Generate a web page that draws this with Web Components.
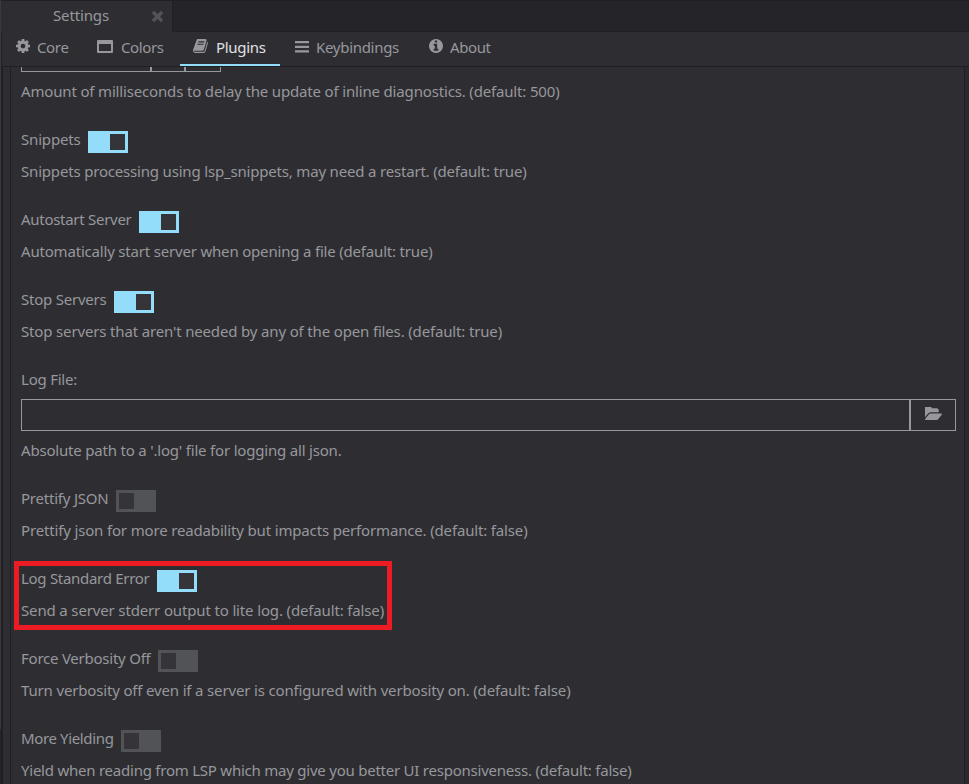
<!DOCTYPE html>
<html lang="en">
<head>
<meta charset="utf-8">
<title>Settings</title>
<style>
html,body{margin:0;height:100%;overflow:hidden;background:#2e2e32}
body{font:15px/20px "Noto Sans","Open Sans",sans-serif;color:#97979c}
</style>
</head>
<body>
<settings-window></settings-window>
<script>
const ICONS = {
  cog: ['128 128 1536 1536', '<path d="M1152 896q0-106-75-181t-181-75-181 75-75 181 75 181 181 75 181-75 75-181zm512-109v222q0 12-8 23t-20 13l-185 28q-19 54-39 91 35 50 107 138 10 12 10 25t-9 23q-27 37-99 108t-94 71q-12 0-26-9l-138-108q-44 23-91 38-16 136-29 186-7 28-36 28h-222q-14 0-24.5-8.5t-11.5-21.5l-28-184q-49-16-90-37l-141 107q-10 9-25 9-14 0-25-11-126-114-165-168-7-10-7-23 0-12 8-23 15-21 51-66.5t54-70.5q-27-50-41-99l-183-27q-13-2-21-12.5t-8-23.5v-222q0-12 8-23t19-13l186-28q14-46 39-92-40-57-107-138-10-12-10-24 0-10 9-23 26-36 98.5-107.5t94.5-71.5q13 0 26 10l138 107q44-23 91-38 16-136 29-186 7-28 36-28h222q14 0 24.5 8.5t11.5 21.5l28 184q49 16 90 37l142-107q9-9 24-9 13 0 25 10 129 119 165 170 7 8 7 22 0 12-8 23-15 21-51 66.5t-54 70.5q26 50 41 98l183 28q13 2 21 12.5t8 23.5z"/>'],
  pane: ['0 0 16 13', '<path fill-rule="evenodd" d="M1 0h14q1 0 1 1v11q0 1-1 1H1q-1 0-1-1V1q0-1 1-1zM2 4v7h12V4z"/>'],
  book: ['64 128 1664 1536', '<path d="M1703 478q40 57 18 129l-275 906q-19 64-76.5 107.5t-122.5 43.5h-923q-77 0-148.5-53.5t-99.5-131.5q-24-67-2-127 0-4 3-27t4-37q1-8-3-21.5t-3-19.5q2-11 8-21t16.5-23.5 16.5-23.5q23-38 45-91.5t30-91.5q3-10 .5-30t-.5-28q3-11 17-28t17-23q21-36 42-92t25-90q1-9-2.5-32t.5-28q4-13 22-30.5t22-22.5q19-26 42.5-84.5t27.5-96.5q1-8-3-25.5t-2-26.5q2-8 9-18t18-23 17-21q8-12 16.5-30.5t15-35 16-36 19.5-32 26.5-23.5 36-11.5 47.5 5.5l-1 3q38-9 51-9h761q74 0 114 56t18 130l-274 906q-36 119-71.5 153.5t-128.5 34.5h-869q-27 0-38 15-11 16-1 43 24 70 144 70h923q29 0 56-15.5t35-41.5l300-987q7-22 5-57 38 15 59 43zm-1064 2q-4 13 2 22.5t20 9.5h608q13 0 25.5-9.5t16.5-22.5l21-64q4-13-2-22.5t-20-9.5h-608q-13 0-25.5 9.5t-16.5 22.5zm-83 256q-4 13 2 22.5t20 9.5h608q13 0 25.5-9.5t16.5-22.5l21-64q4-13-2-22.5t-20-9.5h-608q-13 0-25.5 9.5t-16.5 22.5z"/>'],
  bars: ['0 0 14 12', '<path d="M0 0h14v2.2H0zM0 4.7h14v2.2H0zM0 9.3h14v2.2H0z"/>'],
  info: ['128 128 1536 1536', '<path d="M1152 1376v-160q0-14-9-23t-23-9h-96v-512q0-14-9-23t-23-9h-320q-14 0-23 9t-9 23v160q0 14 9 23t23 9h96v320h-96q-14 0-23 9t-9 23v160q0 14 9 23t23 9h448q14 0 23-9t9-23zm-128-896v-160q0-14-9-23t-23-9h-192q-14 0-23 9t-9 23v160q0 14 9 23t23 9h192q14 0 23-9t9-23zm640 416q0 209-103 385.5t-279.5 279.5-385.5 103-385.5-103-279.5-279.5-103-385.5 103-385.5 279.5-279.5 385.5-103 385.5 103 279.5 279.5 103 385.5z"/>'],
  folder: ['0 256 1815 1280', '<path d="M1815 952q0 31-31 66l-336 396q-43 51-120.5 86.5t-143.5 35.5h-1088q-34 0-60.5-13t-26.5-43q0-31 31-66l336-396q43-51 120.5-86.5t143.5-35.5h1088q34 0 60.5 13t26.5 43zm-343-344v160h-832q-94 0-197 47.5t-164 119.5l-337 396-5 6q0-4-.5-12.5t-.5-12.5v-960q0-92 66-158t158-66h320q92 0 158 66t66 158v32h544q92 0 158 66t66 158z"/>'],
  times: ['302 366 1188 1188', '<path d="M1490 1322q0 40-28 68l-136 136q-28 28-68 28t-68-28l-294-294-294 294q-28 28-68 28t-68-28l-136-136q-28-28-28-68t28-68l294-294-294-294q-28-28-28-68t28-68l136-136q28-28 68-28t68 28l294 294 294-294q28-28 68-28t68 28l136 136q28 28 28 68t-28 68l-294 294 294 294q28 28 28 68z"/>']
};
function define(name, html, setup) {
  const t = document.createElement('template');
  t.innerHTML = html;
  customElements.define(name, class extends HTMLElement {
    connectedCallback() {
      if (this.shadowRoot) return;
      this.attachShadow({mode: 'open'}).append(t.content.cloneNode(true));
      if (setup) setup(this, this.shadowRoot);
    }
  });
}

define('ui-icon', `<style>:host{display:block;flex:none}svg{display:block;width:100%;height:100%;fill:currentColor}</style><svg preserveAspectRatio="none"></svg>`, (el, r) => {
  const [box, body] = ICONS[el.getAttribute('name')];
  const svg = r.querySelector('svg');
  svg.setAttribute('viewBox', box);
  svg.innerHTML = body;
  el.style.width = el.getAttribute('w') + 'px';
  el.style.height = el.getAttribute('h') + 'px';
});

// Text line tracked out to a given advance width.
define('ui-text', `<style>:host{display:block;flex:none;height:20px;line-height:18px;white-space:pre}span{display:inline-block;white-space:pre}</style><span><slot></slot></span>`, (el, r) => {
  const w = +el.getAttribute('w');
  const span = r.querySelector('span');
  el.style.width = w + 'px';
  span.style.letterSpacing = (w - span.getBoundingClientRect().width) / el.textContent.length + 'px';
});

define('ui-toggle', `<style>
:host{display:flex;flex:none;box-sizing:border-box;width:40px;height:22px;padding:3px;background:#525357}
:host([on]){background:#93ddfa;justify-content:flex-end}
i{width:15px;height:16px;background:#353439}
</style><i></i>`);

define('setting-toggle', `<style>
:host{display:block;height:80px}
.head{display:flex;gap:7.5px;height:32px}
ui-toggle{margin-top:1px}
</style><div class="head"><slot name="label"></slot><ui-toggle></ui-toggle></div><slot></slot>`, (el, r) => {
  r.querySelector('ui-toggle').toggleAttribute('on', el.hasAttribute('on'));
});

define('setting-file', `<style>
:host{display:block;height:119px}
.row{display:flex;height:32px;width:935px;box-sizing:border-box;margin:9px 0 10px;border:1px solid #97979c}
.field{flex:1}
.pick{width:44px;border-left:2px solid #97979c;display:flex;align-items:center;justify-content:center;box-sizing:content-box}
ui-icon{margin-top:-3px}
</style><slot name="label"></slot><div class="row"><div class="field"></div><div class="pick"><ui-icon name="folder" w="17" h="13"></ui-icon></div></div><slot></slot>`);

define('setting-number', `<style>
:host{display:block;height:63px}
.row{display:flex;width:200px;height:5px;box-sizing:border-box;border:solid #97979c;border-width:0 1px 1px;margin-bottom:10px}
i{box-sizing:border-box;border-right:2px solid #97979c}
i:first-child{width:130px}i+i{width:34px}
</style><div class="row"><i></i><i></i></div><slot></slot>`);

define('section-tab', `<style>
:host{display:flex;box-sizing:border-box;height:34px;padding:6px 0 0 var(--pad,13px);border-bottom:2px solid transparent;width:var(--w)}
:host([active]){border-color:#93ddfa}
.icon{display:block;color:#97979c;margin-top:var(--dy,2px);margin-right:var(--gap,7px)}
:host([active]) slot{color:#e1e1e6}
</style><div class="icon"></div><slot></slot>`, (el, r) => {
  const icon = document.createElement('ui-icon');
  for (const [a, b] of [['name', 'icon'], ['w', 'iw'], ['h', 'ih']]) icon.setAttribute(a, el.getAttribute(b));
  r.querySelector('.icon').append(icon);
});

define('document-tabs', `<style>
:host{display:flex;height:32px;box-sizing:border-box;border-top:1px solid #202024}
.tab{display:flex;width:172px;box-sizing:border-box;padding:5px 0 0 52px;border-right:1px solid #202024;background:#2e2e32}
ui-icon{color:#525257;margin:4.6px 0 0 42.5px}
.rest{flex:1;background:#252529;border-bottom:1px solid #202024}
</style><div class="tab"><ui-text w="56">Settings</ui-text><ui-icon name="times" w="11" h="11"></ui-icon></div><div class="rest"></div>`);

define('highlight-box', `<style>
:host{display:block;position:absolute;box-sizing:border-box;left:3px;top:494px;width:378px;height:69px;border:5px solid #ed1c24}
</style>`);

define('settings-window', `<style>
:host{display:flex;width:969px;height:784px;overflow:hidden}
.edge{width:1px;flex:none;background:linear-gradient(#3a3a3e 729px,#252529 729px)}
.main{flex:1;display:flex;flex-direction:column;border-left:1px solid #202024;box-sizing:border-box}
document-tabs{margin-left:-1px;flex:none}
nav{display:flex;height:34px;border-bottom:1px solid #202024;flex:none}
.body{flex:1;min-height:0;display:flex;border-left:1px solid #202024}
.gutter{width:7px;flex:none;border-right:1px solid #202024}
.panel{position:relative;flex:1;padding-left:10px;overflow:hidden}
.scroll{width:4px;border-left:1px solid #202024;background:#2a2a2e}
</style>
<div class="edge"></div>
<div class="main">
<document-tabs></document-tabs>
<nav>
<section-tab icon="cog" iw="14" ih="14" style="--w:82px;--pad:14px;--dy:1px"><ui-text w="31.5">Core</ui-text></section-tab>
<section-tab icon="pane" iw="16" ih="13" style="--w:96px;--gap:8px"><ui-text w="42.5">Colors</ui-text></section-tab>
<section-tab active icon="book" iw="15" ih="14" style="--w:100px;--gap:8px;--dy:1px"><ui-text w="49.5">Plugins</ui-text></section-tab>
<section-tab icon="bars" iw="14" ih="12" style="--w:134px;--pad:15px;--dy:3px"><ui-text w="83">Keybindings</ui-text></section-tab>
<section-tab icon="info" iw="14" ih="14" style="--w:90px;--pad:15px;--dy:1px"><ui-text w="40.5">About</ui-text></section-tab>
</nav>
<div class="body"><div class="gutter"></div>
<div class="panel">
<setting-number><ui-text w="538.5">Amount of milliseconds to delay the update of inline diagnostics. (default: 500)</ui-text></setting-number>
<setting-toggle on><ui-text slot="label" w="59.5">Snippets</ui-text><ui-text w="505.5">Snippets processing using lsp_snippets, may need a restart. (default: true)</ui-text></setting-toggle>
<setting-toggle on><ui-text slot="label" w="110.5">Autostart Server</ui-text><ui-text w="411.5">Automatically start server when opening a file (default: true)</ui-text></setting-toggle>
<setting-toggle on><ui-text slot="label" w="85.5">Stop Servers</ui-text><ui-text w="481">Stop servers that aren't needed by any of the open files. (default: true)</ui-text></setting-toggle>
<setting-file><ui-text slot="label" w="56">Log File:</ui-text><ui-text w="320.5">Absolute path to a '.log' file for logging all json.</ui-text></setting-file>
<setting-toggle><ui-text slot="label" w="87.5">Prettify JSON</ui-text><ui-text w="506.5">Prettify json for more readability but impacts performance. (default: false)</ui-text></setting-toggle>
<setting-toggle on><ui-text slot="label" w="128.5">Log Standard Error</ui-text><ui-text w="363">Send a server stderr output to lite log. (default: false)</ui-text></setting-toggle>
<setting-toggle><ui-text slot="label" w="129.5">Force Verbosity Off</ui-text><ui-text w="549.5">Turn verbosity off even if a server is configured with verbosity on. (default: false)</ui-text></setting-toggle>
<setting-toggle><ui-text slot="label" w="92.5">More Yielding</ui-text><ui-text w="610.5">Yield when reading from LSP which may give you better UI responsiveness. (default: false)</ui-text></setting-toggle>
<highlight-box></highlight-box>
</div>
<div class="scroll"></div></div>
</div>`);
</script>
</body>
</html>
